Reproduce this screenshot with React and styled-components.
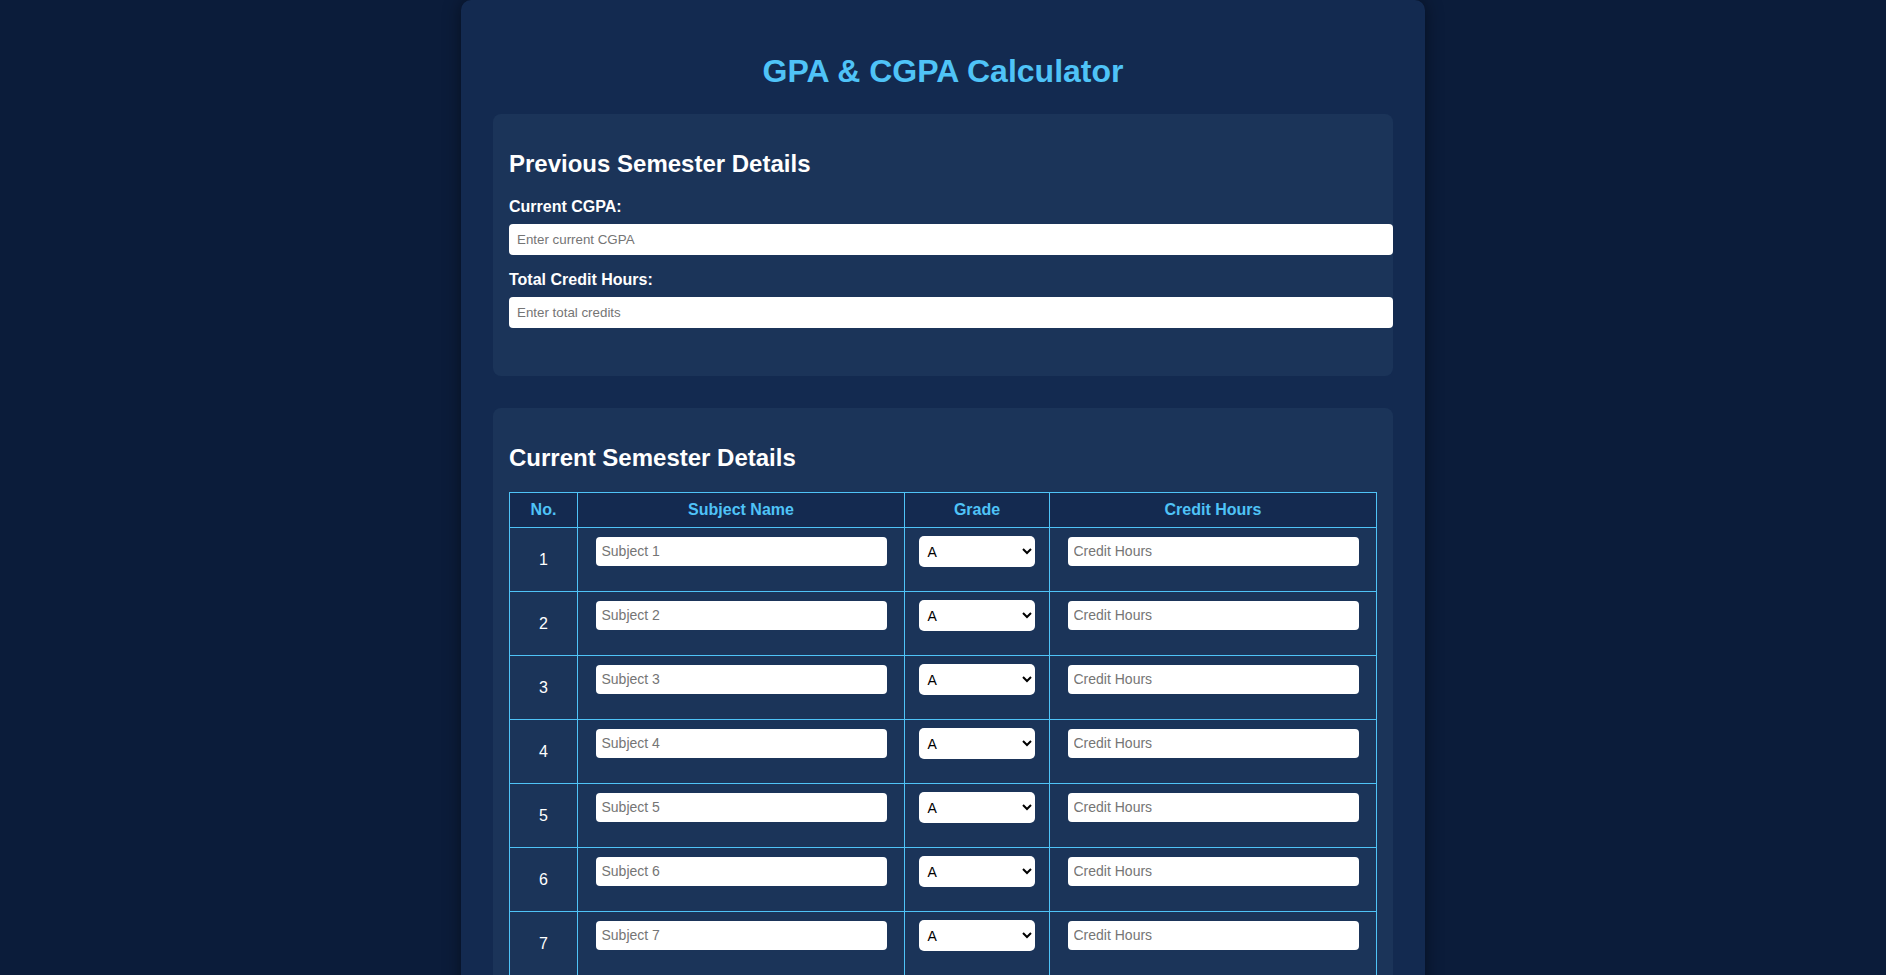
import React from "react";
import styled, { createGlobalStyle } from "styled-components";

const GlobalStyle = createGlobalStyle`
  html, body {
    margin: 0;
    padding: 0;
    background: #0b1c3a;
  }
  body {
    font-family: "Liberation Sans", Arial, Helvetica, sans-serif;
    color: #ffffff;
  }
`;

const Container = styled.div`
  max-width: 900px;
  margin: 0 auto;
  padding: 32px;
  background: #132a50;
  border-radius: 10px;
  box-shadow: 0 0 18px rgba(0, 0, 0, 0.45);
`;

const Title = styled.h1`
  margin: 21px 0 24px;
  text-align: center;
  color: #4fc3f7;
  font-size: 32px;
  font-weight: bold;
`;

const Panel = styled.section`
  background: #1b3459;
  border-radius: 8px;
  padding: 16px 16px ${(p) => p.$padBottom || 16}px;
  margin-bottom: 32px;
`;

const PanelTitle = styled.h2`
  margin: 20px 0 20px;
  font-size: 24px;
  font-weight: bold;
  color: #ffffff;
`;

const Label = styled.label`
  display: block;
  margin-bottom: 8px;
  font-size: 16px;
  font-weight: bold;
  color: #ffffff;
`;

const TextInput = styled.input`
  display: block;
  box-sizing: border-box;
  width: calc(100% + 16px);
  height: 31px;
  padding: 8px;
  margin: 0 0 16px;
  border: none;
  border-radius: 4px;
  background: #ffffff;
  font-family: "Liberation Sans", Arial, sans-serif;
  font-size: 13.33px;
  line-height: 15px;
  color: #000;
  outline: none;
  &::placeholder {
    color: #757575;
  }
`;

const Table = styled.table`
  width: 100%;
  margin-top: 1px;
  border-collapse: collapse;
  table-layout: fixed;
`;

const Col = styled.col`
  width: ${(p) => (p.$w ? `${p.$w}px` : "auto")};
`;

const Th = styled.th`
  padding: 8px;
  border: 1px solid #4fc3f7;
  background: #142a50;
  color: #4fc3f7;
  font-size: 16px;
  font-weight: bold;
  text-align: center;
`;

const Td = styled.td`
  padding: 8px;
  border: 1px solid #4fc3f7;
  font-size: 16px;
  color: #ffffff;
  text-align: center;
  vertical-align: middle;
`;

const CellInput = styled.input`
  display: block;
  width: 90%;
  margin: 1px auto 17px;
  padding: 6px;
  border: none;
  border-radius: 4px;
  background: #ffffff;
  font-family: "Liberation Sans", Arial, sans-serif;
  font-size: 14px;
  line-height: 17px;
  color: #000;
  outline: none;
  &::placeholder {
    color: #757575;
  }
`;

const GradeSelect = styled.select`
  display: block;
  width: 90%;
  height: 31px;
  margin: 0 auto 16px;
  padding: 0 4px;
  border: none;
  border-radius: 5px;
  background: #ffffff;
  font-family: "Liberation Sans", Arial, sans-serif;
  font-size: 14px;
  color: #000;
  outline: none;
`;

const grades = ["A+", "A", "A-", "B+", "B", "B-", "C+", "C", "C-", "D", "F"];
const rows = [1, 2, 3, 4, 5, 6, 7];

export default function App() {
  return (
    <>
      <GlobalStyle />
      <Container>
        <Title>GPA &amp; CGPA Calculator</Title>

        <Panel $padBottom={32}>
          <PanelTitle>Previous Semester Details</PanelTitle>
          <Label htmlFor="cgpa">Current CGPA:</Label>
          <TextInput id="cgpa" type="number" placeholder="Enter current CGPA" />
          <Label htmlFor="credits">Total Credit Hours:</Label>
          <TextInput id="credits" type="number" placeholder="Enter total credits" />
        </Panel>

        <Panel>
          <PanelTitle>Current Semester Details</PanelTitle>
          <Table>
            <colgroup>
              <Col $w={68} />
              <Col />
              <Col $w={145} />
              <Col />
            </colgroup>
            <thead>
              <tr>
                <Th>No.</Th>
                <Th>Subject Name</Th>
                <Th>Grade</Th>
                <Th>Credit Hours</Th>
              </tr>
            </thead>
            <tbody>
              {rows.map((n) => (
                <tr key={n}>
                  <Td>{n}</Td>
                  <Td>
                    <CellInput type="text" placeholder={`Subject ${n}`} />
                  </Td>
                  <Td>
                    <GradeSelect defaultValue="A">
                      {grades.map((g) => (
                        <option key={g} value={g}>
                          {g}
                        </option>
                      ))}
                    </GradeSelect>
                  </Td>
                  <Td>
                    <CellInput type="number" placeholder="Credit Hours" />
                  </Td>
                </tr>
              ))}
            </tbody>
          </Table>
        </Panel>
      </Container>
    </>
  );
}
